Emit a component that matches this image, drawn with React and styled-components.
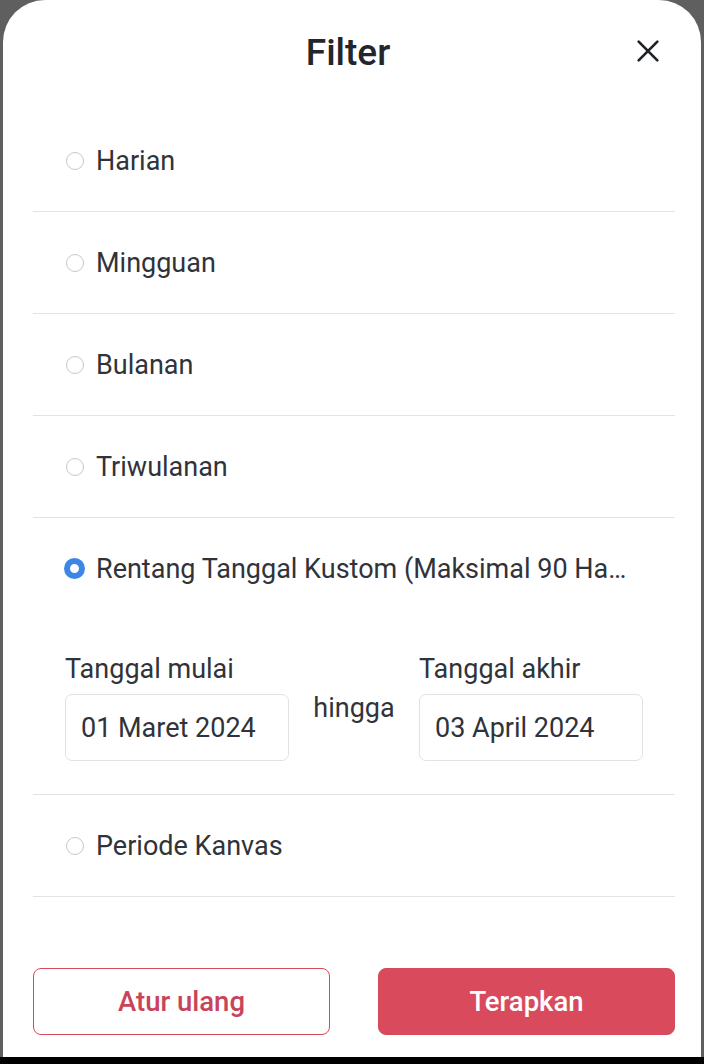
import React, { useState } from 'react';
import styled, { createGlobalStyle } from 'styled-components';

const GlobalStyle = createGlobalStyle`
	html, body {
		margin: 0;
		padding: 0;
		background: #5f5f5f;
	}
	body {
		font-family: Roboto, "Noto Sans", "Liberation Sans", sans-serif;
	}
`;

const options = [
	{ id: 'daily', label: 'Harian' },
	{ id: 'weekly', label: 'Mingguan' },
	{ id: 'monthly', label: 'Bulanan' },
	{ id: 'quarterly', label: 'Triwulanan' },
	{ id: 'custom', label: 'Rentang Tanggal Kustom (Maksimal 90 Hari)' },
	{ id: 'canvas', label: 'Periode Kanvas' },
];

const CloseIcon = () => (
	<svg width="32" height="32" viewBox="0 0 24 24" fill="none" stroke="#1f2328" strokeWidth="2" strokeLinecap="round">
		<path d="M5 5 L19 19 M19 5 L5 19" />
	</svg>
);

const App = () => {
	const [selected, setSelected] = useState('custom');
	return (
		<Screen>
			<GlobalStyle />
			<Sheet>
				<Header>
					<Title>Filter</Title>
					<CloseButton aria-label="Tutup"><CloseIcon /></CloseButton>
				</Header>
				<List>
					{options.map(opt => (
						<Row key={opt.id} $expanded={opt.id === 'custom' && selected === 'custom'}>
							<Option onClick={() => setSelected(opt.id)}>
								<Radio $checked={selected === opt.id} />
								<OptionLabel>{opt.label}</OptionLabel>
							</Option>
							{opt.id === 'custom' && selected === 'custom' ? (
								<DateRange>
									<FieldLabel>Tanggal mulai</FieldLabel>
									<span />
									<FieldLabel>Tanggal akhir</FieldLabel>
									<DateBox>01 Maret 2024</DateBox>
									<Between>hingga</Between>
									<DateBox>03 April 2024</DateBox>
								</DateRange>
							) : null}
						</Row>
					))}
				</List>
				<Footer>
					<Button>Atur ulang</Button>
					<Button $primary>Terapkan</Button>
				</Footer>
			</Sheet>
			<NavBar />
		</Screen>
	);
};

const Screen = styled.div`
	width: 704px;
	height: 1064px;
	display: flex;
	flex-direction: column;
	overflow: hidden;
`;

const Sheet = styled.div`
	flex: 1;
	margin: 0 3px;
	background: #ffffff;
	border-radius: 42px 42px 0 0;
	padding: 0 26px 0 30px;
	display: flex;
	flex-direction: column;
`;

const Header = styled.div`
	height: 110px;
	position: relative;
	display: flex;
	justify-content: center;
	padding-top: 31px;
	padding-right: 12px;
	box-sizing: border-box;
`;

const Title = styled.h1`
	margin: 0;
	font-size: 37px;
	line-height: 44px;
	font-weight: 500;
	color: #23262b;
`;

const CloseButton = styled.button`
	position: absolute;
	right: 11px;
	top: 35px;
	padding: 0;
	border: 0;
	background: none;
	display: flex;
`;

const List = styled.div`
	display: flex;
	flex-direction: column;
`;

const Row = styled.div`
	border-bottom: 1px solid #e3e3e3;
	padding-bottom: ${props => props.$expanded ? '33px' : '0'};
`;

const Option = styled.div`
	height: 101px;
	display: flex;
	align-items: center;
	padding-left: 33px;
	cursor: pointer;
`;

const Radio = styled.span`
	width: ${props => props.$checked ? '21px' : '18px'};
	height: ${props => props.$checked ? '21px' : '18px'};
	margin-left: ${props => props.$checked ? '-2px' : '0'};
	margin-right: ${props => props.$checked ? '11px' : '12px'};
	box-sizing: border-box;
	border-radius: 50%;
	border: ${props => props.$checked ? '6.5px solid #3d86e8' : '1.5px solid #c8c8c8'};
	flex-shrink: 0;
`;

const OptionLabel = styled.span`
	font-size: 27px;
	color: #30333a;
	white-space: nowrap;
	overflow: hidden;
	text-overflow: ellipsis;
	max-width: 534px;
`;

const DateRange = styled.div`
	display: grid;
	grid-template-columns: 224px 130px 224px;
	grid-template-rows: auto 67px;
	row-gap: 9px;
	padding-left: 32px;
	margin-top: 34px;
`;

const FieldLabel = styled.span`
	font-size: 27px;
	line-height: 32px;
	color: #30333a;
`;

const DateBox = styled.div`
	border: 1.5px solid #e2e2e2;
	border-radius: 7px;
	display: flex;
	align-items: center;
	padding-left: 15px;
	font-size: 27px;
	color: #30333a;
`;

const Between = styled.span`
	font-size: 27px;
	color: #30333a;
	text-align: center;
	line-height: 28px;
`;

const Footer = styled.div`
	margin-top: 71px;
	display: grid;
	grid-template-columns: 1fr 1fr;
	column-gap: 48px;
`;

const Button = styled.button`
	height: 67px;
	border-radius: 8px;
	border: 1.5px solid #d14b5d;
	background: ${props => props.$primary ? '#d94a5d' : '#ffffff'};
	color: ${props => props.$primary ? '#ffffff' : '#c9435a'};
	font-family: Roboto, "Liberation Sans", sans-serif;
	font-size: 27.5px;
	font-weight: 500;
`;

const NavBar = styled.div`
	height: 7px;
	background: #000000;
`;

export default App;
